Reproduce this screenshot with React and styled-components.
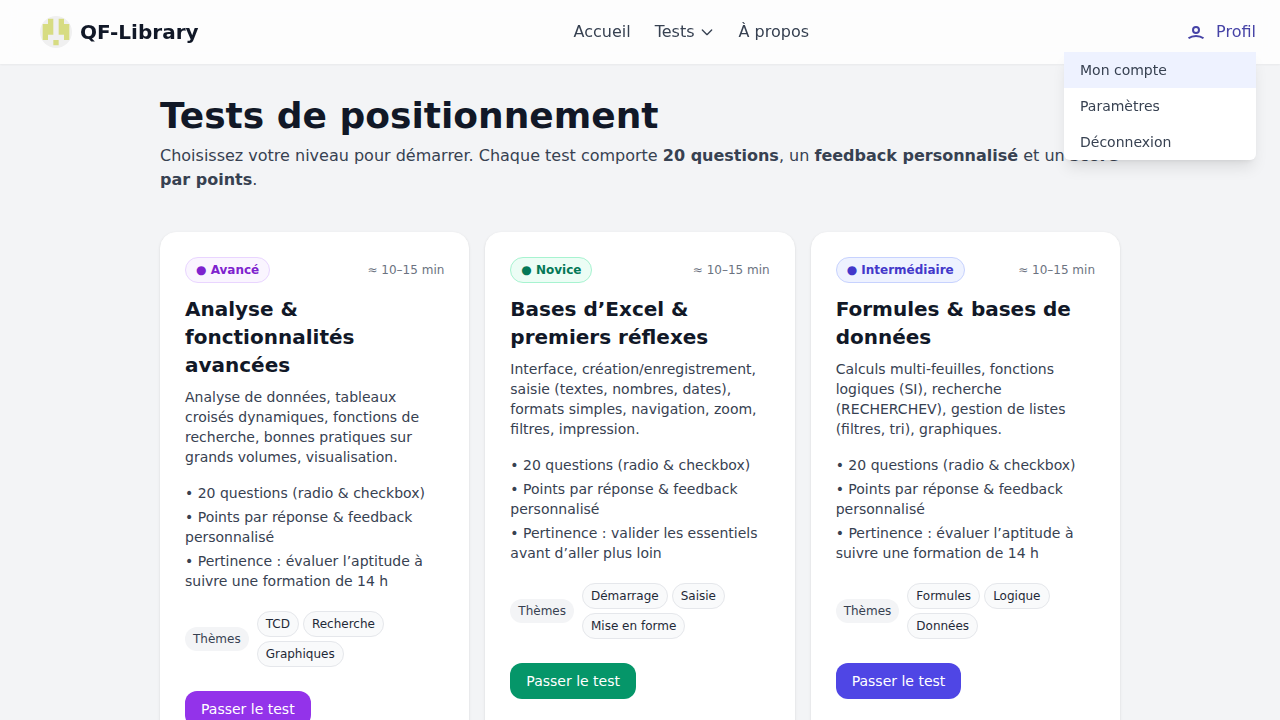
import React from "react";
import styled, { createGlobalStyle } from "styled-components";

const GlobalStyle = createGlobalStyle`
  *, *::before, *::after { box-sizing: border-box; }
  body {
    margin: 0;
    background: #f3f4f6;
    color: #111827;
    font-family: "DejaVu Sans", sans-serif;
    font-size: 16px;
    line-height: 24px;
  }
  h1, h2, p, ul { margin: 0; padding: 0; }
  ul { list-style: none; }
  a { color: inherit; text-decoration: none; }
  button { font: inherit; color: inherit; background: none; border: 0; padding: 0; cursor: pointer; }
`;

const Header = styled.header`
  position: sticky;
  top: 0;
  z-index: 10;
  display: flex;
  align-items: center;
  justify-content: space-between;
  height: 64px;
  padding: 0 24px 0 40px;
  background: rgba(255, 255, 255, 0.8);
  box-shadow: 0 1px 2px rgba(0, 0, 0, 0.05);
  backdrop-filter: blur(8px);
`;

const Brand = styled.a`
  display: flex;
  align-items: center;
  gap: 8px;
  font-size: 20px;
  line-height: 28px;
  font-weight: 700;
`;

const Logo = styled.svg`
  width: 32px;
  height: 32px;
  border-radius: 50%;
`;

const Nav = styled.nav`
  display: flex;
  gap: 24px;
  color: #374151;
`;

const NavButton = styled.button`
  display: flex;
  align-items: center;
  gap: 4px;
`;

const Profile = styled.div`
  position: relative;
`;

const ProfileButton = styled.button`
  display: flex;
  align-items: center;
  gap: 8px;
  color: #4643a6;
`;

const Menu = styled.ul`
  position: absolute;
  top: 100%;
  right: 0;
  width: 192px;
  margin-top: 8px;
  overflow: hidden;
  background: #fff;
  border-radius: 0 0 6px 6px;
  box-shadow: 0 10px 15px -3px rgba(0, 0, 0, 0.1), 0 4px 6px -4px rgba(0, 0, 0, 0.1);
`;

const MenuLink = styled.a`
  display: block;
  padding: 8px 16px;
  font-size: 14px;
  line-height: 20px;
  color: #374151;
  background: ${({ $active }) => ($active ? "#eef2ff" : "transparent")};
`;

const Main = styled.main`
  max-width: 1024px;
  margin: 0 auto;
  padding: 32px;
`;

const Title = styled.h1`
  font-size: 36px;
  line-height: 40px;
  font-weight: 700;
`;

const Intro = styled.p`
  margin-top: 8px;
  color: #374151;
`;

const Cards = styled.section`
  display: grid;
  grid-template-columns: repeat(3, minmax(0, 1fr));
  gap: 16px;
  margin-top: 40px;
`;

const Card = styled.article`
  padding: 24px;
  background: #fff;
  border: 1px solid #fff;
  border-radius: 16px;
  box-shadow: 0 1px 3px rgba(0, 0, 0, 0.1), 0 1px 2px -1px rgba(0, 0, 0, 0.1);
`;

const CardTop = styled.div`
  display: flex;
  align-items: center;
  justify-content: space-between;
  font-size: 12px;
  line-height: 16px;
  color: #6b7280;
`;

const Level = styled.span`
  padding: 4px 10px;
  font-weight: 600;
  color: ${({ $tone }) => $tone.text};
  background: ${({ $tone }) => $tone.soft};
  border: 1px solid ${({ $tone }) => $tone.line};
  border-radius: 999px;
`;

const CardTitle = styled.h2`
  margin-top: 12px;
  font-size: 20px;
  line-height: 28px;
  font-weight: 600;
`;

const Description = styled.p`
  margin-top: 8px;
  font-size: 14px;
  line-height: 20px;
  color: #374151;
`;

const Points = styled.ul`
  display: grid;
  gap: 4px;
  margin-top: 16px;
  font-size: 14px;
  line-height: 20px;
  color: #374151;
`;

const Themes = styled.div`
  display: flex;
  align-items: center;
  gap: 8px;
  margin-top: 20px;
  font-size: 12px;
  line-height: 16px;
`;

const ThemesLabel = styled.span`
  padding: 4px 8px;
  color: #374151;
  background: #f3f4f6;
  border-radius: 999px;
`;

const Tags = styled.ul`
  display: flex;
  flex-wrap: wrap;
  gap: 4px;
`;

const Tag = styled.li`
  padding: 4px 8px;
  color: #1f2937;
  background: #f9fafb;
  border: 1px solid #e5e7eb;
  border-radius: 999px;
`;

const StartButton = styled.button`
  margin-top: 24px;
  padding: 8px 16px;
  font-size: 14px;
  line-height: 20px;
  color: #fff;
  background: ${({ $tone }) => $tone.solid};
  border-radius: 12px;
`;

const purple = { text: "#7e22ce", soft: "#faf5ff", line: "#e9d5ff", solid: "#9333ea" };
const green = { text: "#047857", soft: "#ecfdf5", line: "#a7f3d0", solid: "#059669" };
const indigo = { text: "#4338ca", soft: "#eef2ff", line: "#c7d2fe", solid: "#4f46e5" };

const tests = [
  {
    level: "Avancé",
    tone: purple,
    title: "Analyse & fonctionnalités avancées",
    description:
      "Analyse de données, tableaux croisés dynamiques, fonctions de recherche, bonnes pratiques sur grands volumes, visualisation.",
    goal: "Pertinence : évaluer l’aptitude à suivre une formation de 14 h",
    tags: ["TCD", "Recherche", "Graphiques"],
  },
  {
    level: "Novice",
    tone: green,
    title: "Bases d’Excel & premiers réflexes",
    description:
      "Interface, création/enregistrement, saisie (textes, nombres, dates), formats simples, navigation, zoom, filtres, impression.",
    goal: "Pertinence : valider les essentiels avant d’aller plus loin",
    tags: ["Démarrage", "Saisie", "Mise en forme"],
  },
  {
    level: "Intermédiaire",
    tone: indigo,
    title: "Formules & bases de données",
    description:
      "Calculs multi-feuilles, fonctions logiques (SI), recherche (RECHERCHEV), gestion de listes (filtres, tri), graphiques.",
    goal: "Pertinence : évaluer l’aptitude à suivre une formation de 14 h",
    tags: ["Formules", "Logique", "Données"],
  },
];

function TestCard({ test }) {
  return (
    <Card>
      <CardTop>
        <Level $tone={test.tone}>● {test.level}</Level>
        <span>≈ 10–15 min</span>
      </CardTop>
      <CardTitle>{test.title}</CardTitle>
      <Description>{test.description}</Description>
      <Points>
        <li>• 20 questions (radio & checkbox)</li>
        <li>• Points par réponse & feedback personnalisé</li>
        <li>• {test.goal}</li>
      </Points>
      <Themes>
        <ThemesLabel>Thèmes</ThemesLabel>
        <Tags>
          {test.tags.map((tag) => (
            <Tag key={tag}>{tag}</Tag>
          ))}
        </Tags>
      </Themes>
      <StartButton type="button" $tone={test.tone}>Passer le test</StartButton>
    </Card>
  );
}

export default function App() {
  return (
    <>
      <GlobalStyle />
      <Header>
        <Brand href="#accueil">
          <Logo viewBox="0 0 420 420" aria-hidden="true">
            <rect width="420" height="420" fill="#f0f0f0" />
            <path
              fill="#d7dc82"
              d="M105 35h70v210h-70v70H35V105h70zM245 35h70v70h70v210h-70v-70h-70zM175 315h70v70h-70z"
            />
          </Logo>
          QF-Library
        </Brand>
        <Nav>
          <a href="#accueil">Accueil</a>
          <NavButton type="button" aria-haspopup="true">
            Tests
            <svg width="16" height="16" viewBox="0 0 24 24" fill="none" stroke="currentColor" strokeWidth="2" strokeLinecap="round" strokeLinejoin="round" aria-hidden="true">
              <path d="M19 9l-7 7-7-7" />
            </svg>
          </NavButton>
          <a href="#a-propos">À propos</a>
        </Nav>
        <Profile>
          <ProfileButton type="button" aria-haspopup="true" aria-expanded="true">
            <svg width="24" height="24" viewBox="0 0 24 24" fill="none" stroke="currentColor" strokeWidth="2" aria-hidden="true">
              <circle cx="12" cy="10" r="3" />
              <path d="M4.500 18.300c4-3.100 11-3.100 15 0" />
            </svg>
            Profil
          </ProfileButton>
          <Menu>
            <li><MenuLink href="#compte" $active>Mon compte</MenuLink></li>
            <li><MenuLink href="#parametres">Paramètres</MenuLink></li>
            <li><MenuLink href="#deconnexion">Déconnexion</MenuLink></li>
          </Menu>
        </Profile>
      </Header>
      <Main>
        <Title>Tests de positionnement</Title>
        <Intro>
          Choisissez votre niveau pour démarrer. Chaque test comporte <strong>20 questions</strong>, un{" "}
          <strong>feedback personnalisé</strong> et un <strong>score par points</strong>.
        </Intro>
        <Cards>
          {tests.map((test) => (
            <TestCard key={test.level} test={test} />
          ))}
        </Cards>
      </Main>
    </>
  );
}
